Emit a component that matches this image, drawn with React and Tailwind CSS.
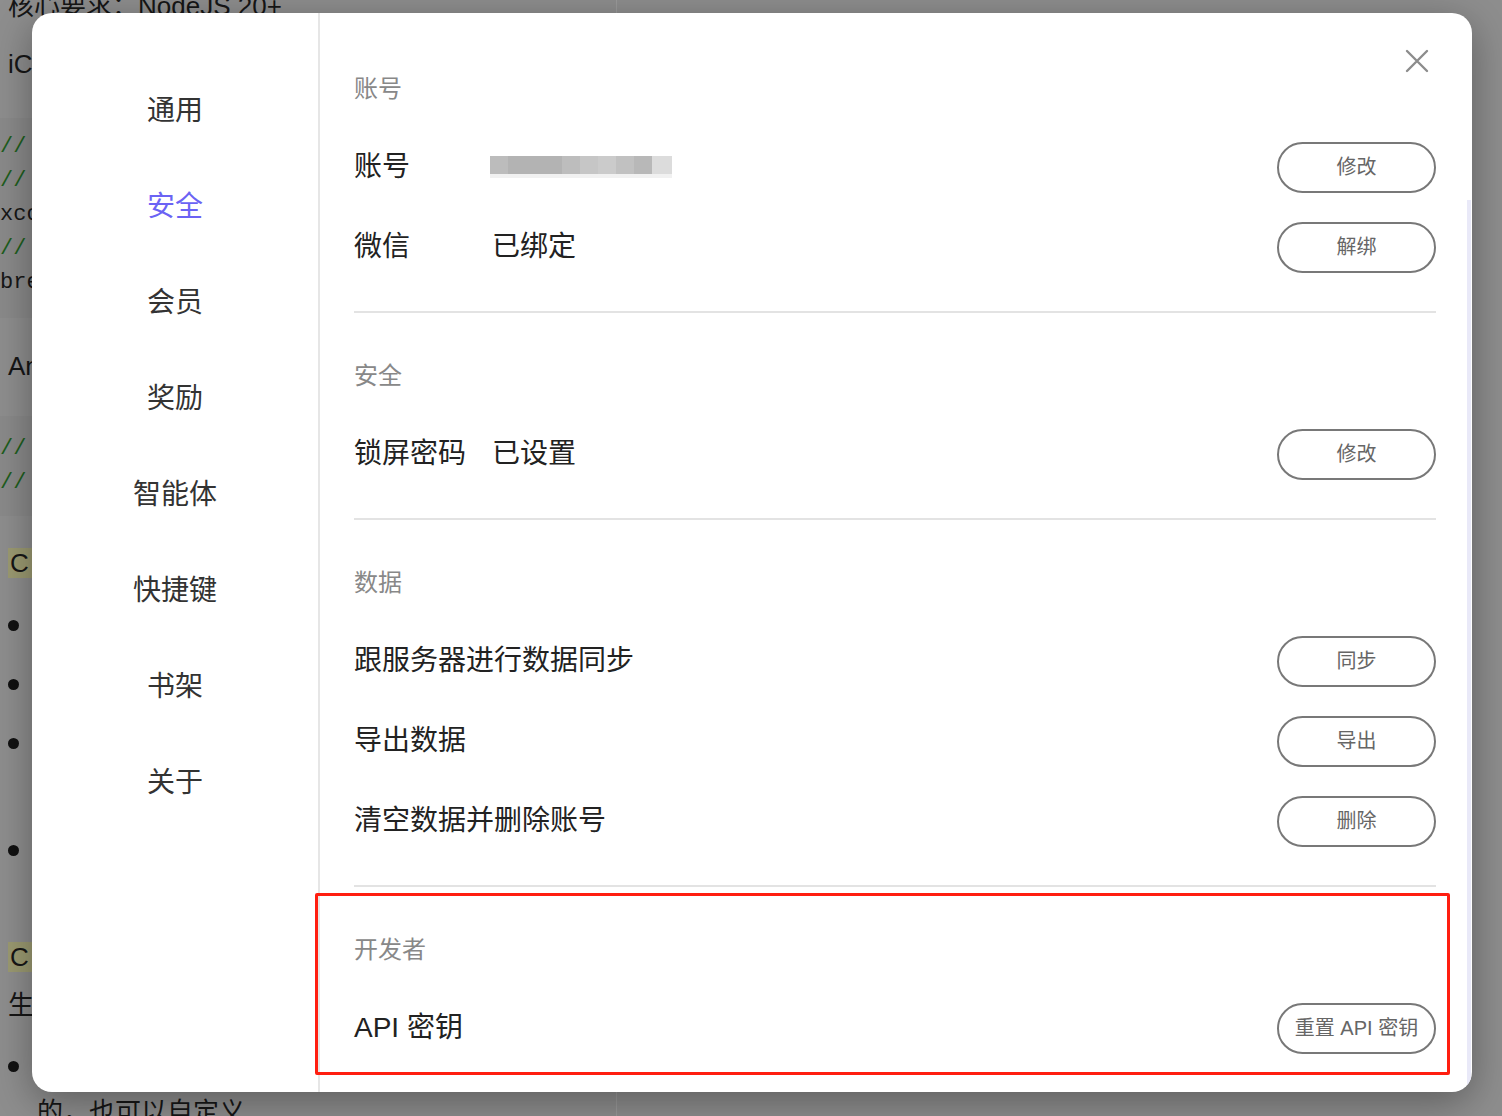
import React from "react";

const navItems = ["通用", "安全", "会员", "奖励", "智能体", "快捷键", "书架", "关于"];

const sections = [
    {
        title: "账号",
        rows: [
            { label: "账号", blurred: true, action: "修改" },
            { label: "微信", value: "已绑定", action: "解绑" }
        ]
    },
    {
        title: "安全",
        rows: [{ label: "锁屏密码", value: "已设置", action: "修改" }]
    },
    {
        title: "数据",
        rows: [
            { label: "跟服务器进行数据同步", action: "同步", wide: true },
            { label: "导出数据", action: "导出", wide: true },
            { label: "清空数据并删除账号", action: "删除", wide: true }
        ]
    },
    {
        title: "开发者",
        rows: [{ label: "API 密钥", action: "重置 API 密钥", wide: true }]
    }
];

const blurBlocks = [
    ["w-[18px]", "bg-[#bcbcbc]"],
    ["w-[54px]", "bg-[#b3b3b3]"],
    ["w-[18px]", "bg-[#bdbdbd]"],
    ["w-[18px]", "bg-[#c6c6c6]"],
    ["w-[18px]", "bg-[#cbcbcb]"],
    ["w-[18px]", "bg-[#c1c1c1]"],
    ["w-[18px]", "bg-[#b8b8b8]"],
    ["w-[20px]", "bg-[#dcdcdc]"]
];

function BackgroundPage() {
    return (
        <div className="flex h-full">
            <div className="w-[617px] border-r border-[#9b9b9b] text-[26px] text-[#161616] pl-[8px]">
                <div className="-mt-[12px] h-[40px] leading-[36px]">核心要求：NodeJS 20+</div>
                <div className="mt-[16px] h-[40px] leading-[40px]">iCloud 同步配置说明</div>

                {/* code block */}
                <div className="-ml-[8px] mt-[34px] h-[200px] bg-[#8a8a8a] pt-[12px] font-['Liberation_Mono',monospace] text-[22px] leading-[34px]">
                    <div className="text-[#1d5e1d]">// 安装命令行工具</div>
                    <div className="text-[#1d5e1d]">// 仅首次需要</div>
                    <div>xcode-select --install</div>
                    <div className="text-[#1d5e1d]">// 安装 node</div>
                    <div>brew install node</div>
                </div>

                <div className="mt-[28px] h-[40px] leading-[40px]">Android 构建环境</div>

                <div className="-ml-[8px] mt-[30px] h-[100px] bg-[#8a8a8a] pt-[16px] font-['Liberation_Mono',monospace] text-[22px] leading-[34px]">
                    <div className="text-[#1d5e1d]">// 需要 JDK 17</div>
                    <div className="text-[#1d5e1d]">// 以及 Android SDK</div>
                </div>

                <div className="mt-[25px] h-[45px] leading-[45px]">
                    <span className="bg-[#9c9b72] pl-[2px] pr-[16px]">C</span> 配置
                </div>

                <ul className="mt-[10px]">
                    <li className="h-[59px] flex items-center gap-[16px]"><span className="w-[11px] h-[11px] rounded-full bg-[#111]" />配置项一</li>
                    <li className="h-[59px] flex items-center gap-[16px]"><span className="w-[11px] h-[11px] rounded-full bg-[#111]" />配置项二</li>
                    <li className="h-[59px] flex items-center gap-[16px]"><span className="w-[11px] h-[11px] rounded-full bg-[#111]" />配置项三</li>
                    <li className="mt-[48px] h-[59px] flex items-center gap-[16px]"><span className="w-[11px] h-[11px] rounded-full bg-[#111]" />配置项四</li>
                </ul>

                <div className="mt-[55px] h-[45px] leading-[45px]">
                    <span className="bg-[#9c9b72] pl-[2px] pr-[16px]">C</span> 模式
                </div>
                <div className="h-[50px] leading-[50px]">生成的配置文件</div>
                <div className="mt-[16px] h-[40px] flex items-center gap-[16px]"><span className="w-[11px] h-[11px] rounded-full bg-[#111]" />默认使用内置模板</div>
                <div className="mt-[4px] pl-[29px] h-[40px] leading-[44px]">的，也可以自定义</div>
            </div>
            <div className="flex-1" />
        </div>
    );
}

function SettingsModal() {
    return (
        <div className="absolute left-[32px] top-[13px] w-[1440px] h-[1079px] bg-white rounded-[20px] shadow-[0_10px_40px_rgba(0,0,0,0.35)] flex overflow-hidden">
            {/* SIDEBAR */}
            <div className="w-[288px] border-r-2 border-[#e6e6e6] pt-[50px]">
                {navItems.map((item) => (
                    <div
                        key={item}
                        className={
                            "h-[96px] flex items-center justify-center text-[28px] " +
                            (item === "安全" ? "text-[#6b63f4]" : "text-[#333333]")
                        }
                    >
                        {item}
                    </div>
                ))}
            </div>

            {/* CONTENT */}
            <div className="flex-1 pl-[34px] pr-[36px] pt-[13px]">
                {sections.map((s, i) => (
                    <div
                        key={s.title}
                        className={
                            "pt-[47px] " +
                            (i < sections.length - 1 ? "pb-[24px] border-b-2 border-[#e3e3e3]" : "pb-[24px]")
                        }
                    >
                        <div className="h-[32px] leading-[32px] text-[24px] text-[#888888] mb-[22px]">
                            {s.title}
                        </div>
                        {s.rows.map((r) => (
                            <div key={r.label} className="h-[80px] flex items-center text-[28px] text-[#222222]">
                                <div className={r.wide ? "" : "w-[138px]"}>{r.label}</div>
                                {r.value && <div>{r.value}</div>}
                                {r.blurred && (
                                    <div className="flex flex-col -ml-[2px]">
                                        <div className="flex h-[18px]">
                                            {blurBlocks.map(([w, c], k) => (
                                                <div key={k} className={w + " " + c} />
                                            ))}
                                        </div>
                                        <div className="h-[4px] w-[182px] bg-[#f1f1f1]" />
                                    </div>
                                )}
                                <button className="ml-auto w-[159px] h-[51px] rounded-full border-2 border-[#787878] text-[20px] text-[#666666] whitespace-nowrap">
                                    {r.action}
                                </button>
                            </div>
                        ))}
                    </div>
                ))}
            </div>

            {/* CLOSE */}
            <button className="absolute right-[43px] top-[36px] w-[24px] h-[24px] text-[#8c8c8c]">
                <svg viewBox="0 0 24 24" width="24" height="24" fill="none" stroke="currentColor" strokeWidth="2.4" strokeLinecap="round">
                    <path d="M2 2 L22 22 M22 2 L2 22" />
                </svg>
            </button>

            {/* SCROLLBAR */}
            <div className="absolute right-[1px] top-[187px] bottom-[6px] w-[4px] bg-[#e9e9f8]" />

            {/* ANNOTATION */}
            <div className="absolute left-[283px] top-[880px] w-[1135px] h-[182px] border-[3px] border-[#ff1e10] rounded-[2px]" />
        </div>
    );
}

export default function App() {
    return (
        <div className="relative w-full h-[1116px] overflow-hidden bg-[#8e8e8e] font-['Liberation_Sans','Noto_Sans_CJK_SC',sans-serif]">
            <BackgroundPage />
            <SettingsModal />
        </div>
    );
}
